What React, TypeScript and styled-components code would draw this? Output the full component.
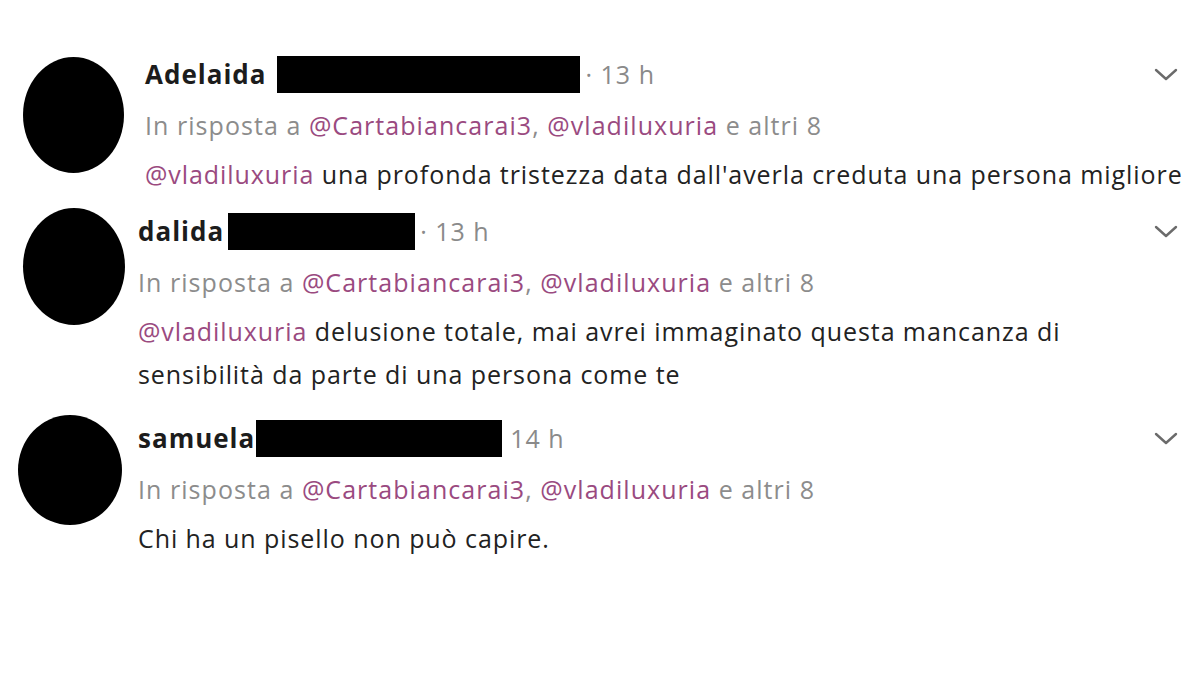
import styled, { createGlobalStyle } from "styled-components";

const GlobalStyle = createGlobalStyle`
  body {
    margin: 0;
    background: #fff;
    font-family: "Open Sans", "Noto Sans", sans-serif;
  }
`;

type Tweet = {
  name: string;
  barWidth: number;
  barGap: number;
  time: string;
  dot: boolean;
  body: string;
  mention: boolean;
  gapTop: number;
  avatar: { x: number; y: number; w: number; h: number };
  contentLeft: number;
};

const tweets: Tweet[] = [
  {
    name: "Adelaida",
    barWidth: 303,
    barGap: 11,
    time: "13 h",
    dot: true,
    mention: true,
    body: "una profonda tristezza data dall'averla creduta una persona migliore",
    gapTop: 55,
    avatar: { x: 23, y: 2, w: 101, h: 116 },
    contentLeft: 145,
  },
  {
    name: "dalida",
    barWidth: 187,
    barGap: 4,
    time: "13 h",
    dot: true,
    mention: true,
    body: "delusione totale, mai avrei immaginato questa mancanza di sensibilità da parte di una persona come te",
    gapTop: 16,
    avatar: { x: 23, y: -4, w: 102, h: 117 },
    contentLeft: 138,
  },
  {
    name: "samuela",
    barWidth: 246,
    barGap: 1,
    time: "14 h",
    dot: false,
    mention: false,
    body: "Chi ha un pisello non può capire.",
    gapTop: 23,
    avatar: { x: 18, y: -4, w: 104, h: 110 },
    contentLeft: 138,
  },
];

const Chevron = () => (
  <svg width="24" height="14" viewBox="0 0 24 14">
    <polyline
      points="2,2 12,11 22,2"
      fill="none"
      stroke="#6b6b6b"
      strokeWidth="2.4"
      strokeLinecap="round"
      strokeLinejoin="round"
    />
  </svg>
);

export default function App() {
  return (
    <>
      <GlobalStyle />
      <Page>
        {tweets.map((t) => (
          <Row key={t.name} $top={t.gapTop} $left={t.avatar.x}>
            <AvatarCol $w={t.contentLeft - t.avatar.x}>
              <Avatar $w={t.avatar.w} $h={t.avatar.h} $y={t.avatar.y} />
            </AvatarCol>
            <Content>
              <Header>
                <Name>{t.name}</Name>
                <Redact $w={t.barWidth} $gap={t.barGap} />
                <Time $dot={t.dot}>
                  {t.dot ? "· " : ""}
                  {t.time}
                </Time>
                <Caret>
                  <Chevron />
                </Caret>
              </Header>
              <Reply>
                In risposta a <Mention>@Cartabiancarai3</Mention>,{" "}
                <Mention>@vladiluxuria</Mention> e altri 8
              </Reply>
              <Body>
                {t.mention && (
                  <>
                    <Mention>@vladiluxuria</Mention>{" "}
                  </>
                )}
                {t.body}
              </Body>
            </Content>
          </Row>
        ))}
      </Page>
    </>
  );
}

const Page = styled.div`
  width: 1200px;
  height: 677px;
  background: #fff;
  overflow: hidden;
  color: #222;
`;

const Row = styled.div<{ $top: number; $left: number }>`
  display: flex;
  padding-top: ${({ $top }) => $top}px;
  padding-left: ${({ $left }) => $left}px;
`;

const AvatarCol = styled.div<{ $w: number }>`
  flex: 0 0 ${({ $w }) => $w}px;
`;

const Avatar = styled.div<{ $w: number; $h: number; $y: number }>`
  width: ${({ $w }) => $w}px;
  height: ${({ $h }) => $h}px;
  margin-top: ${({ $y }) => $y}px;
  border-radius: 50%;
  background: #000;
`;

const Content = styled.div`
  flex: 1;
  min-width: 0;
  padding-right: 8px;
`;

const Header = styled.div`
  display: flex;
  align-items: center;
  height: 38px;
`;

const Name = styled.span`
  font-weight: 700;
  font-size: 26px;
  color: #1c1c1c;
  letter-spacing: 1px;
`;

const Redact = styled.span<{ $w: number; $gap: number }>`
  display: block;
  width: ${({ $w }) => $w}px;
  height: 37px;
  background: #000;
  margin-left: ${({ $gap }) => $gap}px;
`;

const Time = styled.span<{ $dot: boolean }>`
  font-size: 25px;
  color: #8a8a8a;
  margin-left: ${({ $dot }) => ($dot ? 5 : 8)}px;
  letter-spacing: 1px;
`;

const Caret = styled.span`
  margin-left: auto;
  margin-right: 14px;
  display: flex;
  align-items: center;
  padding-top: 2px;
`;

const Reply = styled.div`
  margin-top: 7px;
  line-height: 50px;
  font-size: 25px;
  color: #8c8c8c;
  letter-spacing: 1.05px;
  white-space: nowrap;
`;

const Mention = styled.span`
  color: #9a4a80;
`;

const Body = styled.div`
  margin-top: 3px;
  line-height: 43px;
  font-size: 25px;
  color: #222;
  letter-spacing: 0.93px;
`;
